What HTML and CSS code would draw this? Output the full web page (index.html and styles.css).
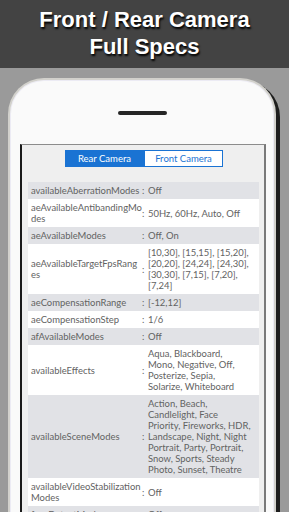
FILE: index.html
```html
<!DOCTYPE html>
<html>
<head>
<meta charset="utf-8">
<link rel="stylesheet" href="styles.css">
</head>
<body>
<div class="page">
  <header class="banner">
    <h1 class="title">Front / Rear Camera<br>Full Specs</h1>
  </header>
  <div class="stage">
    <div class="phone">
      <div class="speaker"></div>
      <div class="screen">
        <div class="tabs">
          <div class="tab active">Rear Camera</div>
          <div class="tab">Front Camera</div>
        </div>
        <div class="specs">
          <div class="row shade"><div class="k">availableAberrationModes</div><div class="c">:</div><div class="v">Off</div></div>
          <div class="row"><div class="k">aeAvailableAntibandingModes</div><div class="c">:</div><div class="v">50Hz, 60Hz, Auto, Off</div></div>
          <div class="row shade"><div class="k">aeAvailableModes</div><div class="c">:</div><div class="v">Off, On</div></div>
          <div class="row"><div class="k">aeAvailableTargetFpsRanges</div><div class="c">:</div><div class="v">[10,30], [15,15], [15,20], [20,20], [24,24], [24,30], [30,30], [7,15], [7,20], [7,24]</div></div>
          <div class="row shade"><div class="k">aeCompensationRange</div><div class="c">:</div><div class="v">[-12,12]</div></div>
          <div class="row"><div class="k">aeCompensationStep</div><div class="c">:</div><div class="v">1/6</div></div>
          <div class="row shade"><div class="k">afAvailableModes</div><div class="c">:</div><div class="v">Off</div></div>
          <div class="row"><div class="k">availableEffects</div><div class="c">:</div><div class="v">Aqua, Blackboard, Mono, Negative, Off, Posterize, Sepia, Solarize, Whiteboard</div></div>
          <div class="row shade"><div class="k">availableSceneModes</div><div class="c">:</div><div class="v">Action, Beach, Candlelight, Face Priority, Fireworks, HDR, Landscape, Night, Night Portrait, Party, Portrait, Snow, Sports, Steady Photo, Sunset, Theatre</div></div>
          <div class="row"><div class="k">availableVideoStabilizationModes</div><div class="c">:</div><div class="v">Off</div></div>
          <div class="row shade"><div class="k">faceDetectModes</div><div class="c">:</div><div class="v">Off</div></div>
        </div>
      </div>
    </div>
  </div>
</div>
</body>
</html>
```
FILE: styles.css
```css
html, body {
  margin: 0;
  padding: 0;
}
body {
  width: 289px;
  height: 512px;
  overflow: hidden;
  background: #9a9a9a;
}
.page {
  height: 512px;
  overflow: hidden;
}
.banner {
  height: 68px;
  background: #434343;
  box-sizing: border-box;
  padding-top: 6px;
}
.title {
  margin: 0;
  font-family: "Liberation Sans", Arial, sans-serif;
  font-weight: bold;
  font-size: 22px;
  line-height: 27px;
  color: #fff;
  text-align: center;
  text-shadow: 1px 2px 2px #000;
}
.stage {
  padding-top: 10px;
  padding-left: 8px;
}
.phone {
  width: 268px;
  height: 480px;
  box-sizing: border-box;
  background: #fafafa;
  border: 2px solid #d2d1cc;
  border-bottom: none;
  border-radius: 36px 36px 0 0;
  box-shadow: 4px 3px 0 #1e1e1e, inset 0 0 0 1px #ecebf4;
  padding: 31px 8px 0 10px;
}
.speaker {
  width: 49px;
  height: 4px;
  border-radius: 2px;
  background: #252525;
  margin: 0 auto 29px;
  position: relative;
  left: -1px;
}
.screen {
  background: #efefef;
  border-top: 1px solid #8c8c8c;
  border-left: 2px solid #1a1a1a;
  border-right: 2px solid #7a7a7a;
  padding: 5px 5px 0 6px;
  height: 420px;
}
.tabs {
  display: flex;
  justify-content: center;
  font-family: Lato, "Open Sans", sans-serif;
  font-size: 9.5px;
  margin-bottom: 15px;
  margin-right: -1px;
}
.tab {
  width: 79px;
  height: 17px;
  box-sizing: border-box;
  line-height: 15px;
  text-align: center;
  border: 1px solid #1a73d3;
  background: #fff;
  color: #1a73d3;
}
.tab.active {
  background: #1a73d3;
  color: #fff;
}
.specs {
  font-family: Lato, "Open Sans", sans-serif;
  font-size: 9.45px;
  line-height: 11px;
  color: #626262;
}
.row {
  display: grid;
  grid-template-columns: 114px 4px 1fr;
  background: #fff;
}
.row.shade {
  background: #e1e2e6;
}
.k {
  padding: 3px 0 3px 3px;
  align-self: center;
  word-break: break-all;
}
.c {
  align-self: center;
  padding: 3px 0;
}
.v {
  padding: 3px 8px 3px 2px;
  align-self: center;
}
```
